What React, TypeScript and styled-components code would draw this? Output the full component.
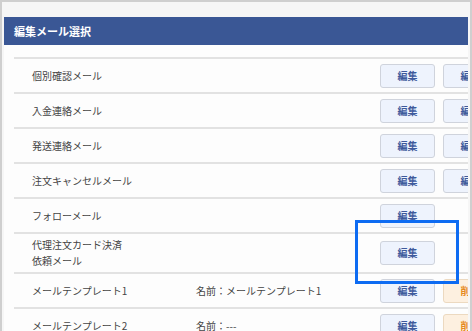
import React, { FunctionComponent, ReactElement } from 'react'
import styled, { createGlobalStyle } from 'styled-components'

interface MailRow {
  label: string[]
  name?: string
  second?: 'edit' | 'delete'
}

const rows: MailRow[] = [
  { label: ['個別確認メール'], second: 'edit' },
  { label: ['入金連絡メール'], second: 'edit' },
  { label: ['発送連絡メール'], second: 'edit' },
  { label: ['注文キャンセルメール'], second: 'edit' },
  { label: ['フォローメール'] },
  { label: ['代理注文カード決済', '依頼メール'] },
  { label: ['メールテンプレート1'], name: '名前：メールテンプレート1', second: 'delete' },
  { label: ['メールテンプレート2'], name: '名前：---', second: 'delete' },
]

const App: FunctionComponent = (): ReactElement => {
  return (
    <>
      <GlobalStyle />
      <Frame>
        <Header>編集メール選択</Header>
        <Body>
          {rows.map((row, index) => (
            <Row key={index} $tall={row.label.length > 1}>
              <Label>
                {row.label.map((line, i) => (
                  <div key={i}>{line}</div>
                ))}
              </Label>
              <Name>{row.name}</Name>
              <Actions>
                <Button>編集</Button>
                {row.second === 'edit' && <Button>編集</Button>}
                {row.second === 'delete' && <Button $variant="delete">削除</Button>}
              </Actions>
            </Row>
          ))}
        </Body>
        <Highlight />
      </Frame>
    </>
  )
}

const GlobalStyle = createGlobalStyle`
  html, body {
    margin: 0;
    height: 331px;
    overflow: hidden;
    background: #ffffff;
    font-family: "Noto Sans CJK JP", "Noto Sans", sans-serif;
  }
`

const Frame = styled.div`
  position: relative;
  box-sizing: border-box;
  width: 472px;
  height: 331px;
  display: flex;
  flex-direction: column;
  padding: 15px 2px 0 2px;
  border: 2px solid #cfcfcf;
  border-bottom: none;
  background: #f6f6f6;
  overflow: hidden;
`

const Header = styled.div`
  flex: none;
  height: 28px;
  display: flex;
  align-items: center;
  padding-left: 10px;
  background: #3a5795;
  color: #ffffff;
  font-size: 11px;
  font-weight: 700;
`

const Body = styled.div`
  flex: 1;
  min-height: 0;
  overflow: hidden;
  background: #fdfdfd;
  padding: 12px 0 0 10px;
`

const Row = styled.div<{ $tall?: boolean }>`
  width: 520px;
  display: flex;
  align-items: center;
  height: ${(p) => (p.$tall ? 38 : 33)}px;
  padding-left: 18px;
  border-top: 2px solid #e2e2e2;
  font-size: 10px;
  line-height: 16px;
  color: #444444;
`

const Label = styled.div`
  width: 164px;
`

const Name = styled.div`
  width: 184px;
`

const Actions = styled.div`
  display: flex;
  gap: 8px;
`

const Button = styled.div<{ $variant?: 'delete' }>`
  width: 55px;
  height: 24px;
  box-sizing: border-box;
  display: flex;
  align-items: center;
  justify-content: center;
  border-radius: 3px;
  font-size: 10px;
  font-weight: 700;
  border: 1px solid ${(p) => (p.$variant === 'delete' ? '#ecd9c0' : '#cfd3dc')};
  background: ${(p) => (p.$variant === 'delete' ? '#fdf0e0' : '#eef3fd')};
  color: ${(p) => (p.$variant === 'delete' ? '#e58a1f' : '#3e5a9c')};
`

const Highlight = styled.div`
  position: absolute;
  left: 353px;
  top: 218px;
  width: 98px;
  height: 58px;
  border: 3px solid #0d6bf2;
  pointer-events: none;
`

export default App
